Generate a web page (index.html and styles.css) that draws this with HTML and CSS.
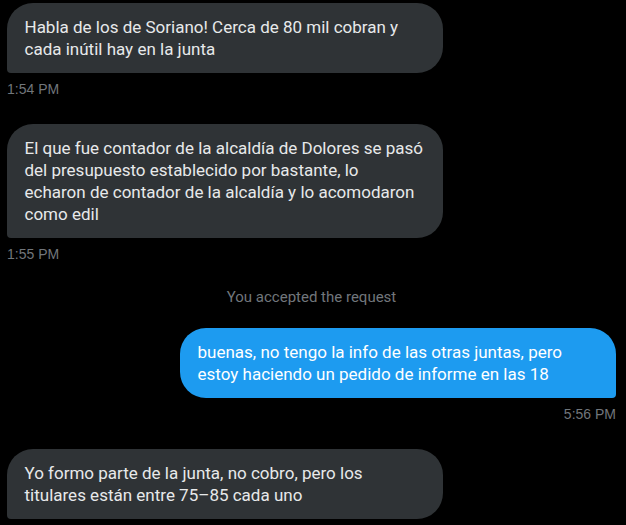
FILE: index.html
```html
<!DOCTYPE html>
<html>
<head>
<meta charset="utf-8">
<link rel="stylesheet" href="styles.css">
</head>
<body>
<main class="thread">
  <div class="group received">
    <div class="bubble">Habla de los de Soriano! Cerca de 80 mil cobran y<br>cada inútil hay en la junta</div>
    <div class="time">1:54 PM</div>
  </div>
  <div class="group received">
    <div class="bubble">El que fue contador de la alcaldía de Dolores se pasó<br>del presupuesto establecido por bastante, lo<br>echaron de contador de la alcaldía y lo acomodaron<br>como edil</div>
    <div class="time">1:55 PM</div>
  </div>
  <div class="system">You accepted the request</div>
  <div class="group sent">
    <div class="bubble">buenas, no tengo la info de las otras juntas, pero<br>estoy haciendo un pedido de informe en las 18</div>
    <div class="time">5:56 PM</div>
  </div>
  <div class="group received">
    <div class="bubble">Yo formo parte de la junta, no cobro, pero los<br>titulares están entre 75–85 cada uno</div>
  </div>
</main>
</body>
</html>
```
FILE: styles.css
```css
html, body {
  margin: 0;
  padding: 0;
  background: #000;
  height: 100%;
  overflow: hidden;
}
.thread {
  display: flex;
  flex-direction: column;
  padding: 3px 10px 0 7px;
}
.group {
  display: flex;
  flex-direction: column;
  margin-bottom: 26px;
}
.received { align-items: flex-start; }
.sent { align-items: flex-end; }
.bubble {
  box-sizing: border-box;
  width: 436px;
  padding: 13px 17.5px;
  font-family: Roboto, "Liberation Sans", sans-serif;
  font-size: 17px;
  line-height: 22px;
  white-space: nowrap;
  border-radius: 26px;
}
.received .bubble {
  background: #2f3336;
  color: #e7e9ea;
  border-bottom-left-radius: 4px;
}
.sent .bubble {
  background: #1d9bf0;
  color: #fff;
  border-bottom-right-radius: 4px;
}
.time {
  margin-top: 7px;
  font-family: "Liberation Sans", Arial, sans-serif;
  font-size: 14px;
  line-height: 18px;
  color: #71767b;
}
.system {
  margin-top: -2px;
  margin-bottom: 21px;
  text-align: center;
  font-family: Roboto, "Liberation Sans", sans-serif;
  font-size: 15px;
  line-height: 20px;
  color: #71767b;
}
```
